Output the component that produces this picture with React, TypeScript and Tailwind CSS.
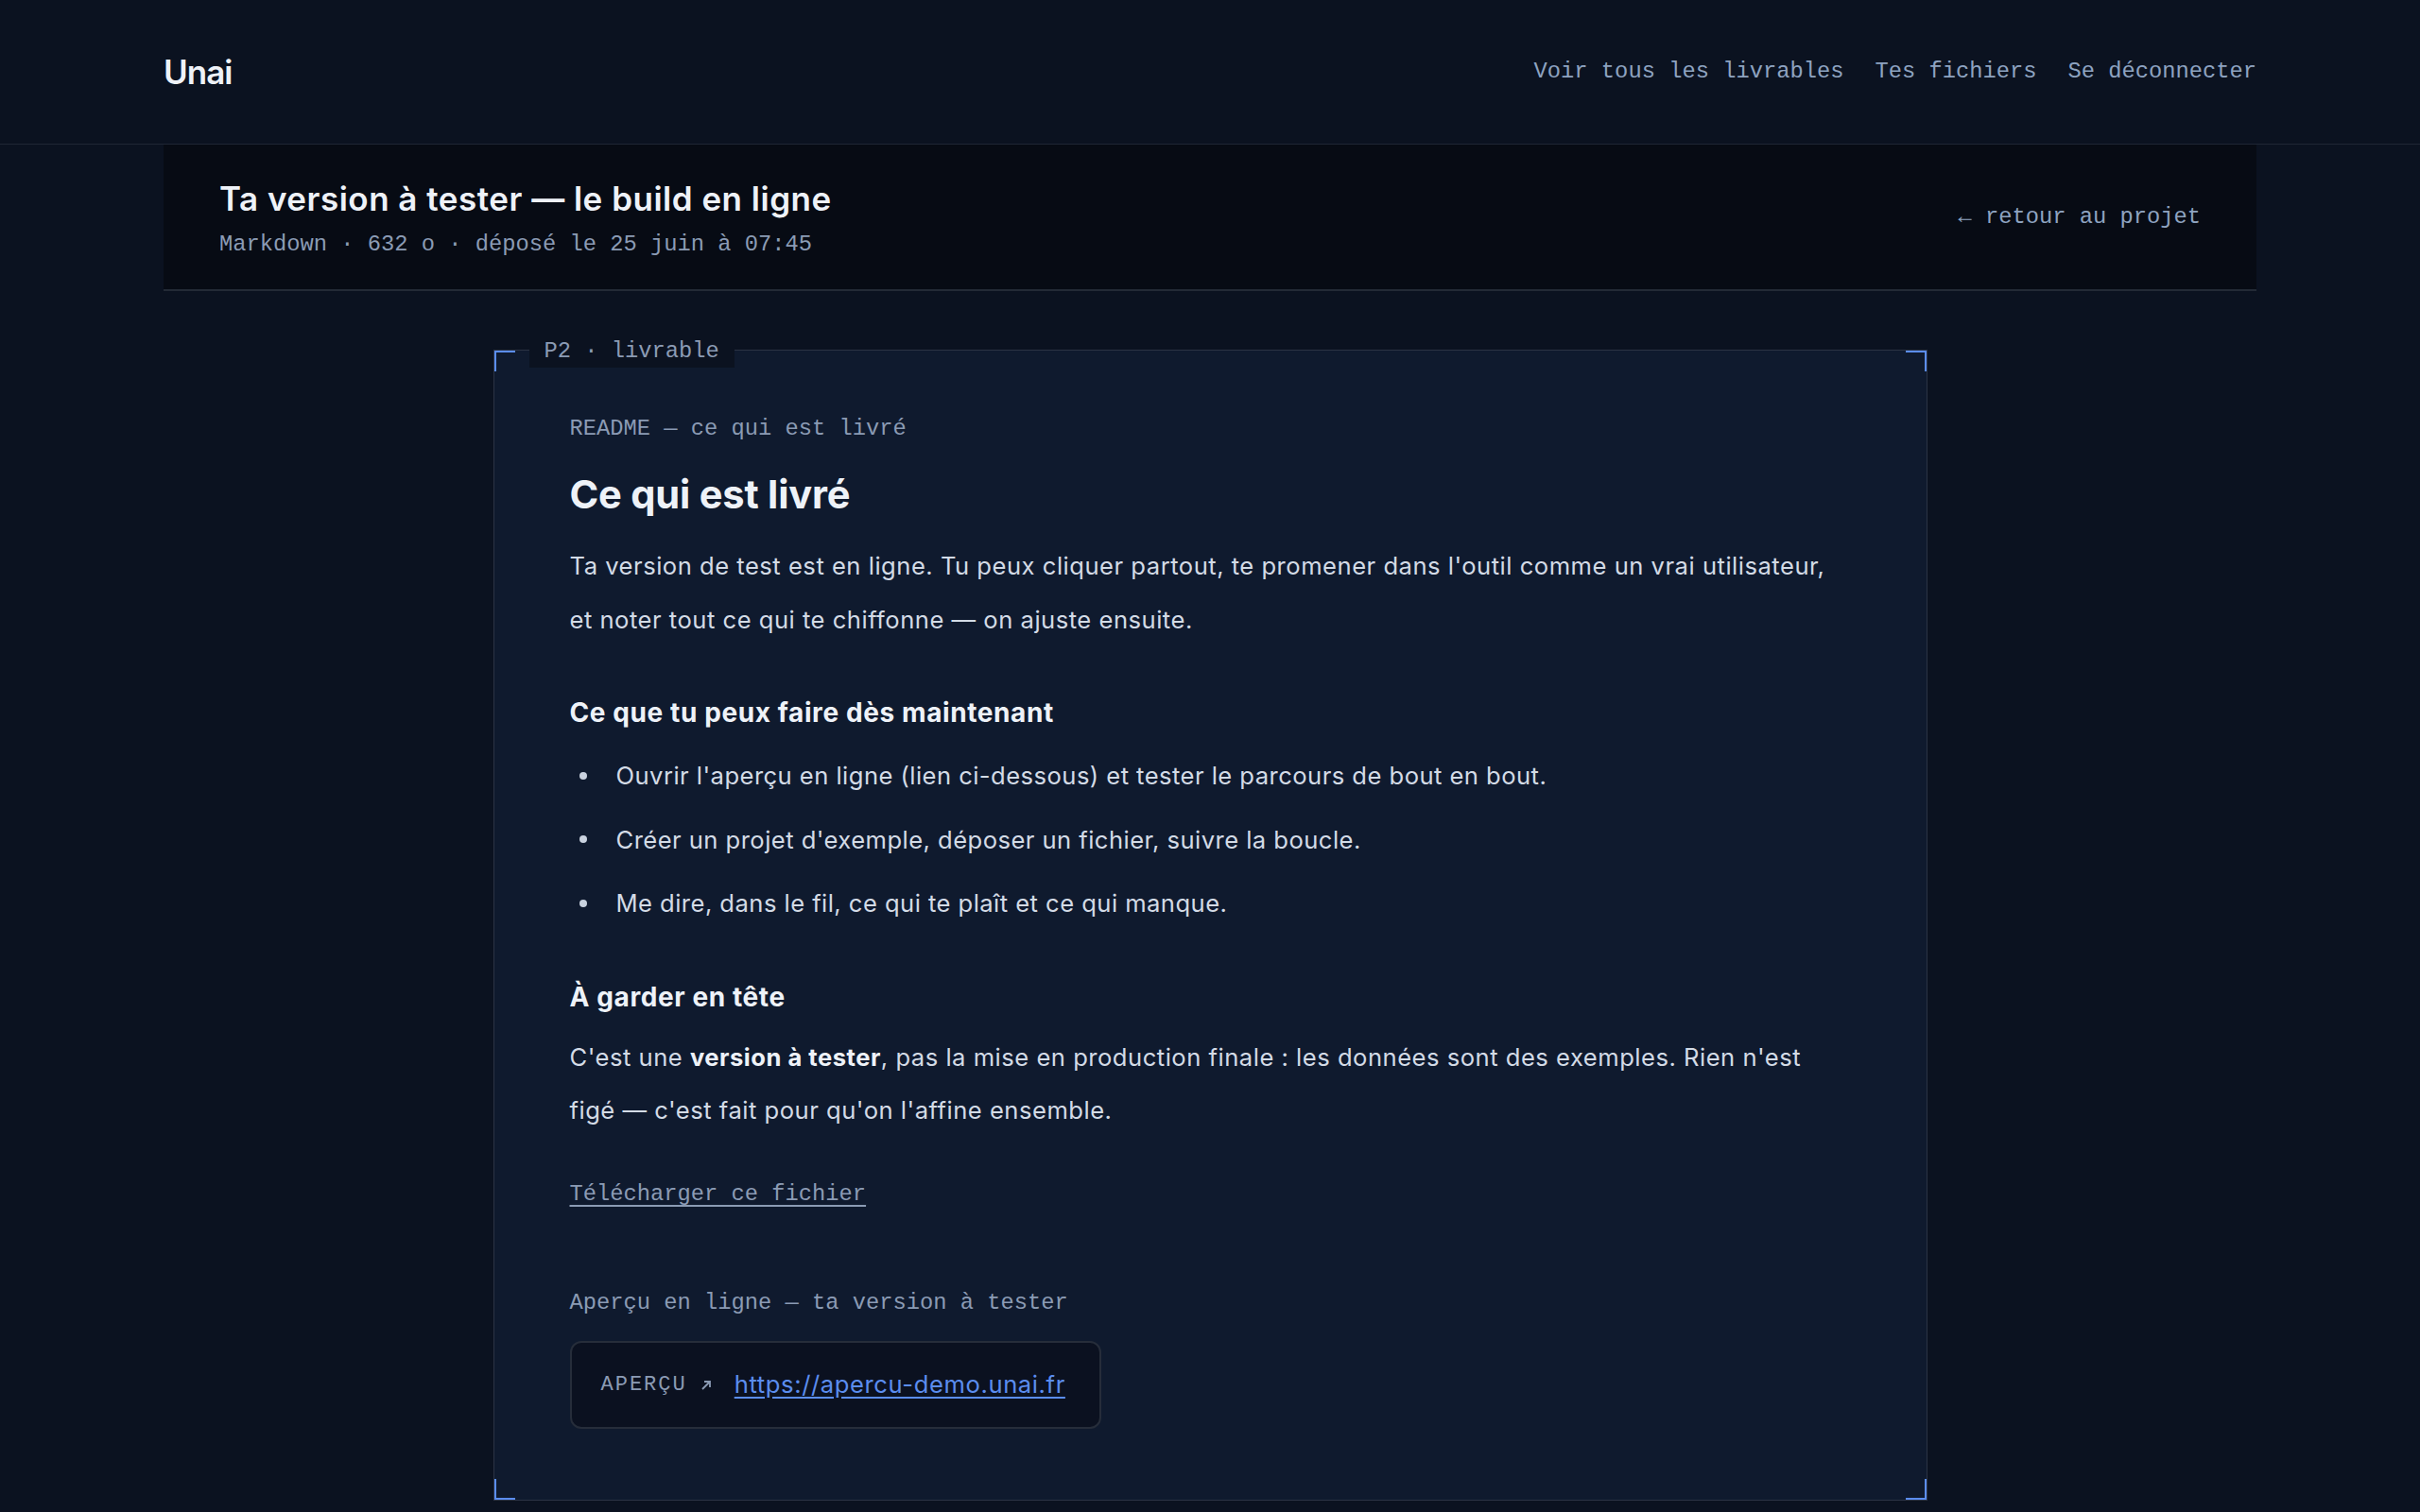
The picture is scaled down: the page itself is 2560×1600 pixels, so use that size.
import { ReactNode } from "react";

const mono = "font-['Liberation_Mono','DejaVu_Sans_Mono',monospace]";
const sans = "font-['Inter','Noto_Sans',sans-serif]";

const Corner = ({ pos }: { pos: string }) => (
  <span className={`pointer-events-none absolute h-[22px] w-[22px] border-[#5b8def] ${pos}`} />
);

const Bullet = ({ children }: { children: ReactNode }) => (
  <li className="flex items-center leading-[57px]">
    <span className="ml-[10px] mr-[31px] h-[8px] w-[8px] shrink-0 rounded-full bg-[#c9d2df]" />
    <span>{children}</span>
  </li>
);

const App = () => {
  return (
    <div className={`min-h-screen bg-[#0b1220] ${sans} text-[#d3dbe6]`}>
      <header className="border-b border-[#1f2634]">
        <div className="mx-auto flex h-[152px] max-w-[2214px] items-center justify-between">
          <span className="text-[35px] font-semibold tracking-[-1px] text-[#eef2f8]">Unai</span>
          <nav className={`flex gap-[33px] ${mono} text-[23.75px] text-[#8ea3c0]`}>
            <a>Voir tous les livrables</a>
            <a>Tes fichiers</a>
            <a>Se déconnecter</a>
          </nav>
        </div>
      </header>

      <div className="mx-auto max-w-[2214px]">
        <div className="flex h-[155px] items-center justify-between border-b-2 border-[#232a36] bg-[#070b14] px-[59px]">
          <div className="flex flex-col pt-[3px]">
            <h1 className="text-[35px] font-semibold leading-[46px] tracking-[0.5px] text-[#eef2f8]">
              Ta version à tester — le build en ligne
            </h1>
            <p className={`mt-[9px] ${mono} text-[23.75px] leading-[34px] text-[#8b9bb4]`}>
              Markdown · 632 o · déposé le 25 juin à 07:45
            </p>
          </div>
          <a className={`${mono} text-[23.75px] text-[#8ea3c0]`}>← retour au projet</a>
        </div>
      </div>

      <main className="flex justify-center pt-[62px]">
        <section className="relative w-[1517px] border border-[#2b3344] bg-[#0f1a2e] px-[80px] pt-[65px] pb-[75px]">
          <Corner pos="left-0 top-0 border-l-2 border-t-2" />
          <Corner pos="right-0 top-0 border-r-2 border-t-2" />
          <Corner pos="left-0 bottom-0 border-l-2 border-b-2" />
          <Corner pos="right-0 bottom-0 border-r-2 border-b-2" />
          <span
            className={`absolute left-[37px] top-[1px] -translate-y-1/2 bg-[#0b1220] px-[16px] ${mono} text-[23.75px] leading-[34px] text-[#8b9bb4]`}
          >
            P2 · livrable
          </span>

          <p className={`${mono} text-[23.75px] leading-[36px] text-[#8b9bb4]`}>README — ce qui est livré</p>

          <h2 className="mt-[24px] text-[41.6px] font-bold leading-[54px] tracking-[-0.2px] text-[#eef2f8]">
            Ce qui est livré
          </h2>
          <p className="mt-[20px] text-[25.6px] leading-[57px] tracking-[0.5px]">
            Ta version de test est en ligne. Tu peux cliquer partout, te promener dans l'outil comme un vrai
            utilisateur, et noter tout ce qui te chiffonne — on ajuste ensuite.
          </p>

          <h3 className="mt-[52px] text-[28px] font-bold leading-[36px] tracking-[0.6px] text-[#eef2f8]">
            Ce que tu peux faire dès maintenant
          </h3>
          <ul className="mt-[20px] flex flex-col gap-[10.5px] text-[25.6px] tracking-[0.45px]">
            <Bullet>Ouvrir l'aperçu en ligne (lien ci-dessous) et tester le parcours de bout en bout.</Bullet>
            <Bullet>Créer un projet d'exemple, déposer un fichier, suivre la boucle.</Bullet>
            <Bullet>Me dire, dans le fil, ce qui te plaît et ce qui manque.</Bullet>
          </ul>

          <h3 className="mt-[53px] text-[28px] font-bold leading-[36px] tracking-[0.6px] text-[#eef2f8]">
            À garder en tête
          </h3>
          <p className="mt-[18px] text-[25.6px] leading-[56px] tracking-[0.5px]">
            C'est une <strong className="font-bold text-[#eef2f8]">version à tester</strong>, pas la mise en
            production finale : les données sont des exemples. Rien n'est figé{"\u00a0"}— c'est fait pour qu'on
            l'affine ensemble.
          </p>

          <a
            className={`mt-[43px] block w-fit ${mono} text-[23.75px] leading-[36px] text-[#8b9bb4] underline underline-offset-[5px]`}
          >
            Télécharger ce fichier
          </a>

          <p className={`mt-[79px] ${mono} text-[23.75px] leading-[36px] text-[#8b9bb4]`}>
            Aperçu en ligne — ta version à tester
          </p>
          <div className="mt-[22px] flex h-[93px] w-fit items-center rounded-[12px] border-2 border-[#262d3a] bg-[#0b1120] pl-[31px] pr-[36px]">
            <span className={`${mono} text-[22px] tracking-[2px] text-[#8b9bb4]`}>APERÇU</span>
            <svg className="ml-[12px]" width="16" height="16" viewBox="0 0 16 16" fill="none">
              <path d="M4 12 L12 4 M6 4 H12 V10" stroke="#8b9bb4" strokeWidth="1.8" />
            </svg>
            <a className="ml-[22px] text-[25.6px] tracking-[0.6px] text-[#5b8def] underline underline-offset-[4px]">
              https://apercu-demo.unai.fr
            </a>
          </div>
        </section>
      </main>
    </div>
  );
};

export default App;
